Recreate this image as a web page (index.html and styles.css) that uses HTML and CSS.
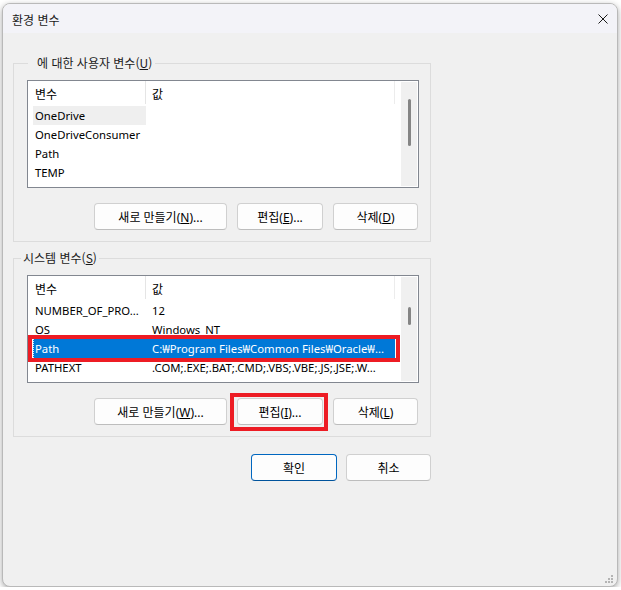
FILE: index.html
```html
<!DOCTYPE html>
<html lang="ko">

<head>
    <meta charset="UTF-8" />
    <title>환경 변수</title>
    <link rel="stylesheet" href="styles.css">
</head>

<body>

    <div class="window">
        <!-- Barre de titre -->
        <div class="titlebar">
            <span class="title">환경 변수</span>
            <svg class="close" width="10" height="10" viewBox="0 0 10 10">
                <path d="M0.5 0.5 L9.5 9.5 M9.5 0.5 L0.5 9.5" stroke="#1a1a1a" stroke-width="1" fill="none" />
            </svg>
        </div>

        <div class="content">
            <!-- Variables utilisateur -->
            <fieldset class="group">
                <legend class="legend-user">에 대한 사용자 변수(<u>U</u>)</legend>
                <div class="list">
                    <div class="list-body">
                        <div class="row head"><span class="c1">변수</span><span class="c2">값</span></div>
                        <div class="row hover"><span class="c1">OneDrive</span><span class="c2"></span></div>
                        <div class="row"><span class="c1">OneDriveConsumer</span><span class="c2"></span></div>
                        <div class="row"><span class="c1">Path</span><span class="c2"></span></div>
                        <div class="row"><span class="c1">TEMP</span><span class="c2"></span></div>
                    </div>
                    <div class="scrollbar"><div class="thumb thumb-user"></div></div>
                </div>
                <div class="btns">
                    <button class="btn new">새로 만들기(<u>N</u>)...</button>
                    <button class="btn edit">편집(<u>E</u>)...</button>
                    <button class="btn del">삭제(<u>D</u>)</button>
                </div>
            </fieldset>

            <!-- Variables système -->
            <fieldset class="group system">
                <legend class="legend-system">시스템 변수(<u>S</u>)</legend>
                <div class="list">
                    <div class="list-body">
                        <div class="row head"><span class="c1">변수</span><span class="c2">값</span></div>
                        <div class="row"><span class="c1">NUMBER_OF_PRO...</span><span class="c2">12</span></div>
                        <div class="row"><span class="c1">OS</span><span class="c2">Windows_NT</span></div>
                        <div class="row selected"><span class="c1">Path</span><span class="c2">C:₩Program Files₩Common Files₩Oracle₩...</span></div>
                        <div class="row"><span class="c1">PATHEXT</span><span class="c2">.COM;.EXE;.BAT;.CMD;.VBS;.VBE;.JS;.JSE;.W...</span></div>
                    </div>
                    <div class="scrollbar"><div class="thumb thumb-system"></div></div>
                </div>
                <div class="btns">
                    <button class="btn new">새로 만들기(<u>W</u>)...</button>
                    <button class="btn edit marked">편집(<u>I</u>)...</button>
                    <button class="btn del">삭제(<u>L</u>)</button>
                </div>
            </fieldset>

            <!-- Boutons du dialogue -->
            <div class="dialog-btns">
                <button class="btn ok">확인</button>
                <button class="btn cancel">취소</button>
            </div>
        </div>

        <svg class="grip" width="9" height="9" viewBox="0 0 9 9">
            <rect x="6" y="0" width="2" height="2" fill="#b4b4b4" />
            <rect x="3" y="3" width="2" height="2" fill="#b4b4b4" />
            <rect x="6" y="3" width="2" height="2" fill="#b4b4b4" />
            <rect x="0" y="6" width="2" height="2" fill="#b4b4b4" />
            <rect x="3" y="6" width="2" height="2" fill="#b4b4b4" />
            <rect x="6" y="6" width="2" height="2" fill="#b4b4b4" />
        </svg>
    </div>

</body>

</html>
```

FILE: styles.css
```css
body {
    margin: 0;
    background: #fff;
    font-family: "Noto Sans", "Noto Sans CJK KR", sans-serif;
    font-size: 12px;
    color: #000;
}

.window {
    position: relative;
    margin: 3px 0 0 2px;
    width: 616px;
    height: 584px;
    box-sizing: border-box;
    border: 1px solid #b9b9b9;
    border-radius: 8px;
    background: #f0f0f0;
    box-shadow: 0 2px 6px rgba(0, 0, 0, 0.35);
    overflow: hidden;
}

.titlebar {
    height: 29px;
    background: #f3f3f8;
    display: flex;
    align-items: center;
    justify-content: space-between;
    padding: 0 9px 0 9px;
}

.title {
    font-family: "Noto Sans CJK KR", sans-serif;
    font-size: 12px;
    color: #1a1a1a;
    padding-top: 1px;
}

.close {
    margin-top: 1px;
}

.content {
    padding: 22px 0 0 10px;
}

/* Cadres de groupe */
.group {
    width: 418px;
    box-sizing: border-box;
    margin: 0;
    padding: 9px 12px 11px 13px;
    border: 1px solid #dcdcdc;
    min-width: 0;
}

.group.system {
    margin-top: 8px;
}

legend {
    line-height: 16px;
    font-family: "Noto Sans CJK KR", sans-serif;
    color: #1a1a1a;
}

.legend-user {
    margin-left: 1px;
    padding: 0 3px 0 9px;
}

.legend-system {
    margin-left: -6px;
    padding: 0 2px;
}

/* Listes */
.list {
    display: flex;
    width: 392px;
    height: 108px;
    box-sizing: border-box;
    border: 1px solid #828790;
    background: #fff;
}

.list-body {
    flex: 1;
    padding: 0 6px 0 5px;
    overflow: hidden;
}

.row {
    display: flex;
    height: 19px;
    line-height: 19px;
    font-size: 11.3px;
    white-space: nowrap;
}

.row .c1 {
    width: 113px;
    flex: none;
    padding-left: 2px;
    box-sizing: border-box;
}

.row .c2 {
    flex: 1;
    padding-left: 6px;
    overflow: hidden;
}

.row.head {
    height: 25px;
    line-height: 16px;
    font-size: 12px;
    font-family: "Noto Sans CJK KR", sans-serif;
}

.row.head .c1,
.row.head .c2 {
    padding-top: 5px;
    height: 23px;
    box-sizing: border-box;
}

.row.head .c1 {
    border-right: 1px solid #e5e5e5;
}

.row.head .c2 {
    border-right: 1px solid #ececec;
}

.row.hover .c1 {
    background: #efefef;
}

.row.selected {
    position: relative;
    background: #0078d7;
    color: #fff;
}

.row.selected .c1 {
    border-left: 1px dotted #dce9f7;
    padding-left: 1px;
}

/* Annotation rouge */
.row.selected::after {
    content: "";
    position: absolute;
    left: -5px;
    right: -5px;
    top: -4px;
    bottom: -4px;
    border: 4px solid #ed1c24;
}

.scrollbar {
    width: 16px;
    margin: 1px 1px 1px 0;
    background: #f0f0f0;
}

.thumb {
    width: 3px;
    margin: 0 auto;
    border-radius: 2px;
    background: #858585;
}

.thumb-user {
    margin-top: 17px;
    height: 47px;
}

.thumb-system {
    margin-top: 30px;
    height: 18px;
}

/* Boutons */
.btns {
    display: flex;
    justify-content: flex-end;
    gap: 10px;
    margin-top: 15px;
}

.btn {
    height: 27px;
    padding: 0;
    font-family: "Noto Sans", "Noto Sans CJK KR", sans-serif;
    font-size: 12px;
    color: #000;
    background: #fdfdfd;
    border: 1px solid #d0d0d0;
    border-bottom-color: #bdbdbd;
    border-radius: 4px;
}

.btn.new {
    width: 133px;
}

.btn.edit {
    width: 86px;
}

.btn.del {
    width: 85px;
}

.btn.marked {
    position: relative;
}

.btn.marked::after {
    content: "";
    position: absolute;
    left: -8px;
    right: -6px;
    top: -6px;
    bottom: -7px;
    border: 4px solid #ed1c24;
}

.dialog-btns {
    display: flex;
    justify-content: flex-end;
    gap: 9px;
    width: 418px;
    margin-top: 17px;
}

.btn.ok {
    width: 86px;
    border-color: #0067c0;
    border-bottom-color: #00539c;
}

.btn.cancel {
    width: 85px;
}

.grip {
    position: absolute;
    right: 3px;
    bottom: 2px;
}
```
